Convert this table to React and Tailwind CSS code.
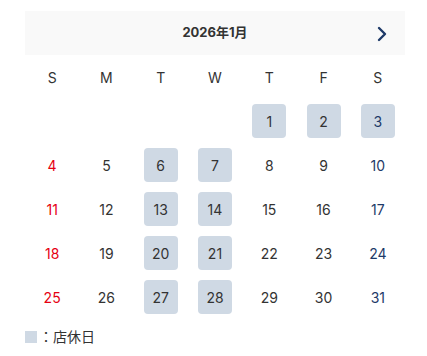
import React from "react";

const closed = new Set([1, 2, 3, 6, 7, 13, 14, 20, 21, 27, 28]);

export default function App() {
  const cells = [];
  for (let i = 0; i < 4; i++) cells.push(null);
  for (let d = 1; d <= 31; d++) cells.push(d);
  const days = ["S", "M", "T", "W", "T", "F", "S"];
  return (
    <div className="bg-white w-[427px] h-[356px] pt-[11px] pl-[25px]" style={{ fontFamily: "Inter, 'Noto Sans CJK JP', sans-serif" }}>
      <div className="w-[380px]">
        <div className="relative h-[44px] bg-[#f9f9f9] flex items-center justify-center">
          <span className="text-[13px] font-bold text-[#333]">2026年1月</span>
          <svg className="absolute right-[17px] top-[15px]" width="12" height="16" viewBox="0 0 12 16" fill="none">
            <path d="M3 2l6 6-6 6" stroke="#1e3a68" strokeWidth="2.4" strokeLinecap="round" strokeLinejoin="round" />
          </svg>
        </div>
        <div className="grid grid-cols-7">
          {days.map((d, i) => (
            <div key={i} className="h-[44px] flex items-center justify-center text-[14px] text-[#333]">{d}</div>
          ))}
          {cells.map((d, i) => {
            const col = i % 7;
            const color = col === 0 ? "text-[#e60012]" : col === 6 ? "text-[#1e3a68]" : "text-[#333]";
            return (
              <div key={i} className="h-[44px] flex items-center justify-center">
                {d && (
                  <div className={`w-[34px] h-[34px] rounded-[4px] flex items-center justify-center text-[14px] ${color} ${closed.has(d) ? "bg-[#cfd9e4]" : ""}`}>
                    {d}
                  </div>
                )}
              </div>
            );
          })}
        </div>
        <div className="flex items-center mt-[7px] text-[14px] text-[#333]">
          <span className="w-[12px] h-[12px] bg-[#cfd9e4] inline-block"></span>
          <span className="ml-[2px]">：店休日</span>
        </div>
      </div>
    </div>
  );
}
